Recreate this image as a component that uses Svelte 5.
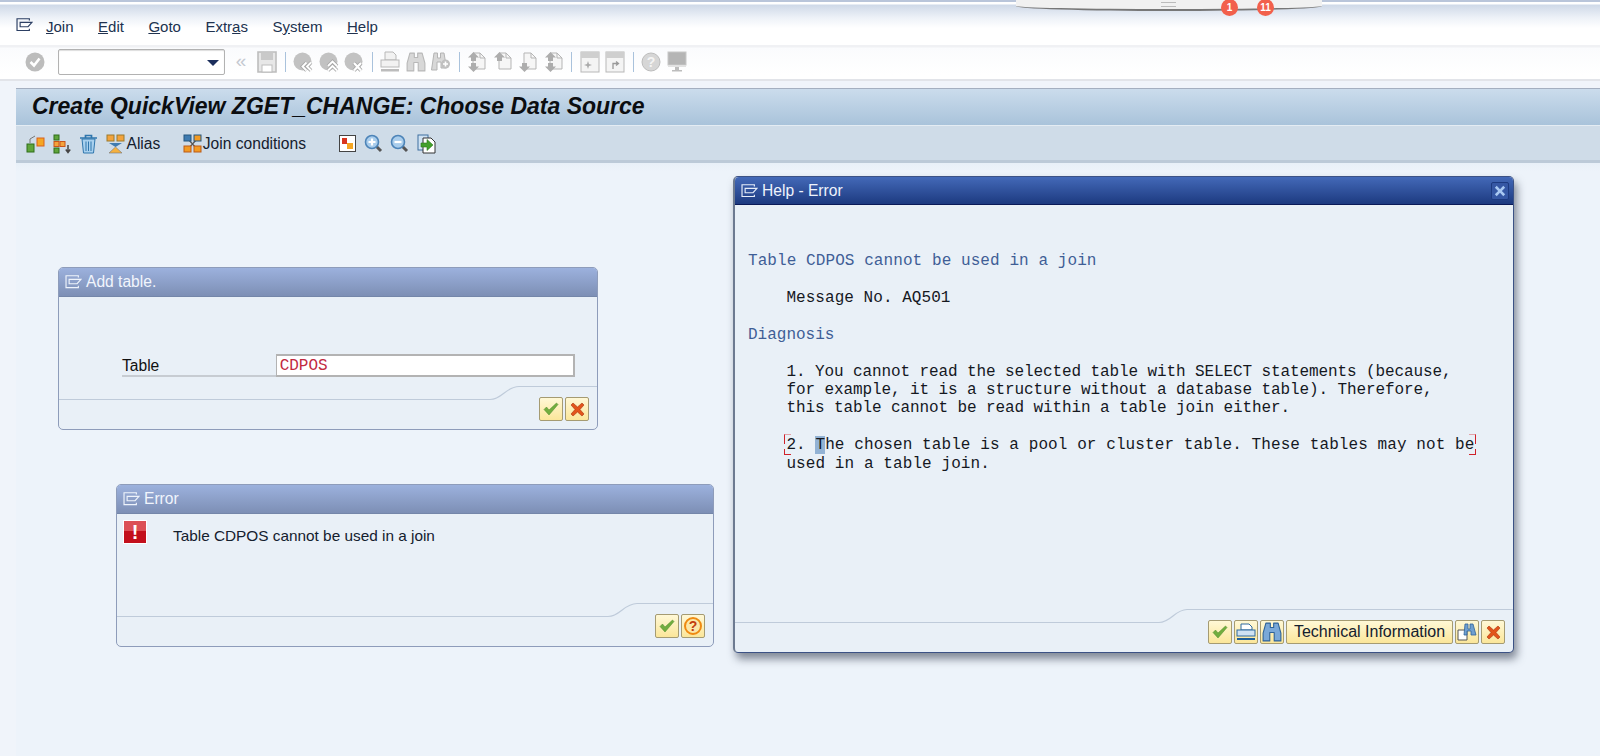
<script>
  const menu = [
    ['J', 'oin', ''], ['E', 'dit', ''], ['G', 'oto', ''],
    ['Extr', 'a', 's'], ['S', 'y', 'stem'], ['H', 'elp', '']
  ];
  const helpText = `Message No. AQ501`;
</script>

{#snippet winIcon(color, size = 17)}
  <svg class="win-icon" width={size} height={size * 0.8} viewBox="0 0 17 14" fill="none" stroke={color} stroke-width="1.2">
    <path d="M13.5 2.5V.8H.8V13H13.5V11" />
    <path d="M4 4.5H16.2L12.2 9H4Z" />
  </svg>
{/snippet}

{#snippet check()}
  <svg width="16" height="14" viewBox="0 0 16 14">
    <path d="M1 7.5 3.5 5 6 8 13.500 1 15 2.500 6 13Z" fill="#72ad3f" stroke="#4c8a28" stroke-width=".5" />
  </svg>
{/snippet}

{#snippet cross()}
  <svg width="15" height="15" viewBox="0 0 15 15">
    <path d="M1 3 3 1 7.5 5 12 1 14 3 10 7.5 14 12 12 14 7.5 10 3 14 1 12 5 7.5Z" fill="#e2541b" stroke="#a8340f" stroke-width=".6" />
  </svg>
{/snippet}

{#snippet binoculars(c = '#7aa8d8', s = '#2f6399')}
  <svg width="20" height="20" viewBox="0 0 18 18">
    <path d="M3.500 1H7.500V5H10.500V1H14.500L17 10V17H11V9.500H7V17H1V10Z" fill={c} stroke={s} stroke-width="1" stroke-linejoin="round" />
  </svg>
{/snippet}

{#snippet greyNav(kind)}
  <svg width="20" height="20" viewBox="0 0 20 20">
    <circle cx="9.500" cy="9.500" r="9" fill="#c2c2c2" />
    {#if kind === 'back'}
      <path d="M13.500 10.500 9.500 14.500 13.500 18.500M18 10.500 14 14.500 18 18.500" fill="none" stroke="#a8a8a8" stroke-width="3.600" />
      <path d="M13.500 10.500 9.500 14.500 13.500 18.500M18 10.500 14 14.500 18 18.500" fill="none" stroke="#fff" stroke-width="1.800" />
    {:else if kind === 'up'}
      <path d="M9 14 13.500 9.500 18 14M9 18.500 13.500 14 18 18.500" fill="none" stroke="#a8a8a8" stroke-width="3.600" />
      <path d="M9 14 13.500 9.500 18 14M9 18.500 13.500 14 18 18.500" fill="none" stroke="#fff" stroke-width="1.800" />
    {:else}
      <path d="M10 11 17 18.500M17 11 10 18.500" fill="none" stroke="#a8a8a8" stroke-width="4" />
      <path d="M10 11 17 18.500M17 11 10 18.500" fill="none" stroke="#fff" stroke-width="2.200" />
    {/if}
  </svg>
{/snippet}

{#snippet doc(kind)}
  <svg width="20" height="22" viewBox="0 0 20 22">
    <path d="M6 2H13L18 7V18H6Z" fill="#f6f6f6" stroke="#b5b5b5" />
    <path d="M13 2V7H18" fill="none" stroke="#b5b5b5" />
    {#if kind === 'first' || kind === 'up' || kind === 'last'}
      <path d="M6.500 1 12 6.500H9V10H4V6.500H1Z" fill="#adadad" />
    {/if}
    {#if kind === 'first' || kind === 'down' || kind === 'last'}
      <path d="M4 12H9V15.500H12L6.500 21 1 15.500H4Z" fill="#adadad" />
    {/if}
  </svg>
{/snippet}

{#snippet magnifier(plus)}
  <svg width="19" height="19" viewBox="0 0 19 19">
    <path d="M12 12 17 17" stroke="#555" stroke-width="3" />
    <circle cx="8" cy="8" r="6.500" fill="#a9cdec" stroke="#4d84b8" stroke-width="1.600" />
    <path d={plus ? 'M4.500 8H11.500M8 4.500V11.500' : 'M4.500 8H11.500'} stroke="#fff" stroke-width="2.200" />
  </svg>
{/snippet}

<div class="page">
  <div class="dock">
    <span class="grip"></span>
    <span class="badge b1">1</span>
    <span class="badge b2">11</span>
  </div>

  <header class="menubar">
    {@render winIcon('#2c3f63')}
    <nav class="menu">
      {#each menu as [a, b, c], i}
        <span class="menu-item">
          {#if i < 3 || i === 5}<u>{a}</u>{b}{:else}{a}<u>{b}</u>{c}{/if}
        </span>
      {/each}
    </nav>
  </header>

  <div class="systoolbar">
    <svg class="ok-icon" width="20" height="20" viewBox="0 0 20 20">
      <circle cx="10" cy="10" r="9.500" fill="#bcbcbc" />
      <path d="M5.500 10 9 13.500 14.500 6.500" fill="none" stroke="#fff" stroke-width="2.600" />
    </svg>
    <div class="combo"><span class="combo-arrow"></span></div>
    <span class="chev">«</span>
    <div class="tgroup">
      <svg width="20" height="22" viewBox="0 0 20 22">
        <path d="M1 1H19V21H1Z" fill="#e7e7e7" stroke="#bdbdbd" stroke-width="1.600" />
        <rect x="4" y="2" width="12" height="7" fill="#c9c9c9" />
        <rect x="5" y="14" width="10" height="7" fill="#fff" stroke="#bdbdbd" />
      </svg>
    </div>
    <span class="tsep"></span>
    <div class="tgroup">
      {@render greyNav('back')}
      {@render greyNav('up')}
      {@render greyNav('x')}
    </div>
    <span class="tsep"></span>
    <div class="tgroup">
      <svg width="20" height="22" viewBox="0 0 20 22">
        <path d="M5 1H13L16 4V9H5Z" fill="#f2f2f2" stroke="#b8b8b8" />
        <rect x="1" y="9" width="18" height="7" fill="#f2f2f2" stroke="#b8b8b8" />
        <rect x="1" y="18" width="18" height="2.500" fill="#bcbcbc" />
      </svg>
      {@render binoculars('#d8d8d8', '#b8b8b8')}
      <svg width="20" height="20" viewBox="0 0 20 20">
        <path d="M3 1H6.500V6H9.500V1H13L15.500 16H10V10H6V18H.5Z" fill="#d8d8d8" stroke="#b4b4b4" />
        <circle cx="14.500" cy="12" r="4.500" fill="#c0c0c0" />
        <path d="M12 12H17M14.500 9.500V14.500" stroke="#fff" stroke-width="1.600" />
      </svg>
    </div>
    <span class="tsep"></span>
    <div class="tgroup">
      {@render doc('first')}
      {@render doc('up')}
      {@render doc('down')}
      {@render doc('last')}
    </div>
    <span class="tsep"></span>
    <div class="tgroup">
      <svg width="20" height="22" viewBox="0 0 20 22">
        <rect x="1" y="1" width="18" height="20" fill="#f4f4f4" stroke="#b8b8b8" />
        <rect x="1" y="1" width="18" height="6" fill="#cfcfcf" />
        <path d="M8 10 9 13 12 14 9 15 8 18 7 15 4 14 7 13Z" fill="#aaa" />
      </svg>
      <svg width="20" height="22" viewBox="0 0 20 22">
        <rect x="1" y="1" width="18" height="20" fill="#f4f4f4" stroke="#b8b8b8" />
        <rect x="1" y="1" width="18" height="6" fill="#cfcfcf" />
        <path d="M8 18V12.500H13M11 10.500 13.500 12.500 11 14.500" fill="none" stroke="#999" stroke-width="1.300" />
      </svg>
    </div>
    <span class="tsep"></span>
    <div class="tgroup">
      <svg width="20" height="20" viewBox="0 0 20 20">
        <circle cx="10" cy="10" r="9" fill="#d6d6d6" stroke="#bcbcbc" />
        <text x="10" y="15" text-anchor="middle" class="qmark">?</text>
      </svg>
      <svg width="20" height="22" viewBox="0 0 20 22">
        <rect x="1" y="1" width="18" height="13" fill="#b5b5b5" stroke="#c8c8c8" />
        <rect x="1" y="14" width="18" height="2" fill="#e2e2e2" />
        <path d="M8 16H12V19H15V20.500H5V19H8Z" fill="#bdbdbd" />
      </svg>
    </div>
  </div>

  <main class="screen">
    <h1 class="title">Create QuickView ZGET_CHANGE: Choose Data Source</h1>

    <div class="apptoolbar">
      <svg class="ai" width="19" height="20" viewBox="0 0 19 20">
        <rect x="1" y="10" width="7" height="8" fill="#5fa53b" stroke="#2f6e1b" />
        <rect x="11" y="4" width="7" height="8" fill="#f5a623" stroke="#d9601c" />
        <path d="M4 9V5L9 2" fill="none" stroke="#777" />
      </svg>
      <svg class="ai" width="19" height="20" viewBox="0 0 19 20">
        <rect x="1" y="1" width="5" height="5" fill="#5fa53b" stroke="#2f6e1b" />
        <rect x="1" y="7.500" width="5" height="5" fill="#f3a33c" stroke="#c9541a" />
        <rect x="7" y="7.500" width="5" height="5" fill="#f3a33c" stroke="#c9541a" />
        <rect x="1" y="14" width="5" height="5" fill="#5fa53b" stroke="#2f6e1b" />
        <path d="M15 11V18M12.800 15.500 15 18.500 17.200 15.500" fill="none" stroke="#444" stroke-width="1.500" />
      </svg>
      <svg class="ai" width="19" height="20" viewBox="0 0 19 20">
        <path d="M1 4H18M6.500 4V1.500H12.500V4" fill="none" stroke="#2f76ad" stroke-width="1.700" />
        <path d="M3 5H16L14.500 19H4.500Z" fill="#a8d0ee" stroke="#2f76ad" />
        <path d="M7 7.500V17M9.500 7.500V17M12 7.500V17" stroke="#2f76ad" />
      </svg>
      <span class="tool-label">
        <svg width="19" height="20" viewBox="0 0 19 20">
          <rect x="1" y="1" width="7" height="6" fill="#f3a33c" stroke="#9b7b2c" />
          <rect x="11" y="1" width="7" height="6" fill="#f3a33c" stroke="#9b7b2c" />
          <path d="M3 9H16L9.500 13Z" fill="#3f7bb0" />
          <path d="M9.500 13 16 19H3Z" fill="#f5b13f" stroke="#777" stroke-width=".6" />
        </svg>
        Alias
      </span>
      <span class="tool-label join">
        <svg width="19" height="20" viewBox="0 0 19 20">
          <path d="M5 5 14 15M14 5 5 15" stroke="#555" stroke-width="1.200" />
          <rect x="1" y="1" width="7" height="6" fill="#3f7bb0" stroke="#24567f" />
          <rect x="11" y="1" width="7" height="6" fill="#f29a22" stroke="#24567f" />
          <rect x="1" y="12" width="7" height="6" fill="#f29a22" stroke="#bc5a17" />
          <rect x="11" y="12" width="7" height="6" fill="#f29a22" stroke="#bc5a17" />
        </svg>
        Join conditions
      </span>
      <div class="zoomgroup">
        <svg width="17" height="17" viewBox="0 0 17 17">
          <rect x=".5" y=".5" width="16" height="16" fill="#fff" stroke="#444" />
          <rect x="3" y="3" width="5" height="6" fill="#d8351f" />
          <rect x="8" y="8" width="6" height="6" fill="#f5a623" />
        </svg>
        {@render magnifier(true)}
        {@render magnifier(false)}
        <svg width="19" height="20" viewBox="0 0 19 20">
          <rect x="1" y="1" width="10" height="15" fill="#cfe2f3" stroke="#3f6f9f" />
          <path d="M6 4H14L18 8V19H6Z" fill="#fff" stroke="#333" />
          <path d="M4 9H10V5.500L16 11 10 16.500V13H4Z" fill="#43a02c" stroke="#2a7a18" stroke-width=".6" />
        </svg>
      </div>
    </div>

    <div class="canvas">
      <section class="dialog add-table">
        <div class="dlg-title light">
          {@render winIcon('#eef3fb')}
          <span>Add table.</span>
        </div>
        <div class="dlg-body add-body">
          <div class="field-row">
            <span class="field-label">Table</span>
            <div class="field-input">CDPOS</div>
          </div>
        </div>
        <div class="dlg-foot">
          <svg class="step-line" height="16" aria-hidden="true">
            <path d="M0 14.500H431C443 14.500 447 1.500 460 1.500H540" fill="none" stroke="#bfcbda" stroke-width="1.200" />
          </svg>
          <div class="btns">
            <button class="sbtn">{@render check()}</button>
            <button class="sbtn">{@render cross()}</button>
          </div>
        </div>
      </section>

      <section class="dialog error">
        <div class="dlg-title light">
          {@render winIcon('#eef3fb')}
          <span>Error</span>
        </div>
        <div class="dlg-body error-body">
          <div class="err-icon"><span>!</span></div>
          <p class="err-text">Table CDPOS cannot be used in a join</p>
        </div>
        <div class="dlg-foot">
          <svg class="step-line" height="16" aria-hidden="true">
            <path d="M0 14.500H491C503 14.500 507 1.500 520 1.500H600" fill="none" stroke="#bfcbda" stroke-width="1.200" />
          </svg>
          <div class="btns">
            <button class="sbtn">{@render check()}</button>
            <button class="sbtn">
              <svg width="18" height="18" viewBox="0 0 18 18">
                <circle cx="9" cy="9" r="8" fill="#fbe7a8" stroke="#ef8a12" stroke-width="2" />
                <text x="9" y="14" text-anchor="middle" class="qmark help">?</text>
              </svg>
            </button>
          </div>
        </div>
      </section>

      <section class="dialog helpwin">
        <div class="dlg-title dark">
          {@render winIcon('#e6edf9')}
          <span>Help - Error</span>
          <span class="closer">
            <svg width="12" height="12" viewBox="0 0 11 11">
              <path d="M.8 2.500 2.500 .8 5.500 3.800 8.500 .8 10.200 2.500 7.200 5.500 10.200 8.500 8.500 10.200 5.500 7.200 2.500 10.200 .8 8.500 3.800 5.500Z" fill="#a8c8f2" />
            </svg>
          </span>
        </div>
        <div class="dlg-body help-body">
          <p class="mono blue head-line">Table CDPOS cannot be used in a join</p>
          <p class="mono sub">{helpText}</p>
          <p class="mono blue sec">Diagnosis</p>
          <p class="mono block one">1. You cannot read the selected table with SELECT statements (because,
for example, it is a structure without a database table). Therefore,
this table cannot be read within a table join either.</p>
          <p class="mono block two"><span class="brk bl"></span><span class="brk br"></span>2. <mark>T</mark>he chosen table is a pool or cluster table. These tables may not be
used in a table join.</p>
        </div>
        <div class="dlg-foot">
          <svg class="step-line" height="16" aria-hidden="true">
            <path d="M0 14.500H424C436 14.500 440 1.500 452 1.500H790" fill="none" stroke="#bfcbda" stroke-width="1.200" />
          </svg>
          <div class="btns">
            <button class="sbtn">{@render check()}</button>
            <button class="sbtn">
              <svg width="20" height="18" viewBox="0 0 20 18">
                <path d="M5 1H13L16 4V7H5Z" fill="#fff" stroke="#2f6b9f" />
                <rect x="1" y="7" width="18" height="6" fill="#cfe2f3" stroke="#2f6b9f" />
                <rect x="1" y="15" width="18" height="2" fill="#1f5f99" />
              </svg>
            </button>
            <button class="sbtn">{@render binoculars()}</button>
            <button class="sbtn wide">Technical Information</button>
            <button class="sbtn">
              <svg width="20" height="18" viewBox="0 0 20 18">
                <path d="M1 7H10V17H1Z" fill="#fff" stroke="#555" />
                <path d="M8 1H11V6H13V1H16L19 12H14V8H10V12H7Z" fill="#6f9fd0" stroke="#2f6399" stroke-width=".8" />
              </svg>
            </button>
            <button class="sbtn">{@render cross()}</button>
          </div>
        </div>
      </section>
    </div>
  </main>
</div>

<style>
  :global(html), :global(body) { margin: 0; height: 100%; }
  :global(body) { background: #f0f4fa; overflow: hidden; }

  .page {
    position: relative;
    height: 756px;
    display: flex;
    flex-direction: column;
    font-family: "Liberation Sans", Arial, sans-serif;
    color: #111;
    overflow: hidden;
  }

  .dock {
    position: absolute;
    left: 1016px;
    top: -8px;
    width: 306px;
    height: 19px;
    box-sizing: border-box;
    background: #f1f1f1;
    border-radius: 0 0 50% 50% / 0 0 5px 5px;
    border-bottom: 2px solid #777;
    z-index: 3;
  }
  .grip {
    position: absolute;
    left: 145px;
    top: 10px;
    width: 15px;
    height: 5px;
    border-top: 1px solid #bbb;
    border-bottom: 1px solid #bbb;
    box-sizing: border-box;
  }
  .badge {
    position: absolute;
    top: 6.500px;
    width: 17px;
    height: 17px;
    border-radius: 50%;
    background: #f2604c;
    color: #fff;
    font-size: 10px;
    font-weight: 700;
    line-height: 17px;
    text-align: center;
  }
  .b1 { left: 205px; }
  .b2 { left: 241px; }

  .menubar {
    height: 45px;
    padding: 6px 0 0 16px;
    display: flex;
    align-items: center;
    background: linear-gradient(#fff 0, #fff 2px, #cfd9e8 3px, #eef2f8 16px, #fff 26px);
    border-top: 2px solid #b9c5da;
    box-sizing: border-box;
  }
  .win-icon { flex: none; }
  .menubar .win-icon { margin-top: -4px; }
  .menu {
    display: flex;
    gap: 24.500px;
    margin-left: 13px;
    font-size: 15px;
    color: #20324f;
  }

  .systoolbar {
    height: 36px;
    padding-left: 25px;
    display: flex;
    align-items: center;
    background: linear-gradient(#f0f1f4 0, #f0f1f4 2px, #fafbfd 3px, #fff 30px);
    border-bottom: 2px solid #e2e4e9;
    box-sizing: border-box;
  }
  .ok-icon { flex: none; }
  .combo {
    width: 167px;
    height: 26px;
    margin-left: 13px;
    box-sizing: border-box;
    background: #fff;
    border: 1px solid #b2b2b2;
    border-radius: 2px;
    position: relative;
    box-shadow: inset 0 1px 1px #ddd;
  }
  .combo-arrow {
    position: absolute;
    right: 5px;
    top: 10px;
    border-left: 6px solid transparent;
    border-right: 6px solid transparent;
    border-top: 6px solid #1c2f5c;
  }
  .chev {
    width: 12px;
    margin: -3px 10px 0 10px;
    font-size: 19px;
    color: #c5c9d1;
    text-align: center;
  }
  .tgroup { display: flex; align-items: center; gap: 5.500px; }
  .tgroup :global(svg) { display: block; flex: none; width: 20px; }
  .tsep { width: 1px; height: 20px; margin: 0 7.500px; background: #a9c2dc; flex: none; }
  .qmark { font: 700 14px "Liberation Sans", sans-serif; fill: #f4f4f4; }
  .qmark.help { fill: #c23c0f; }

  .screen {
    flex: 1;
    display: flex;
    flex-direction: column;
    margin: 7px 0 0 16px;
    min-height: 0;
    border-top: 1px solid #a4afc0;
  }
  .title {
    margin: 0;
    height: 36px;
    padding-left: 16px;
    font-size: 23px;
    font-weight: 700;
    font-style: italic;
    line-height: 35px;
    color: #0b0d10;
    white-space: nowrap;
    background: linear-gradient(#cbdcec, #a9c3da);
    box-sizing: border-box;
  }
  .apptoolbar {
    height: 38px;
    padding: 1px 0 0 10px;
    display: flex;
    align-items: center;
    gap: 7.500px;
    background: #cfdce8;
    border-top: 1px solid #e4ecf3;
    border-bottom: 3px solid #bccad8;
    box-sizing: border-box;
  }
  .ai { flex: none; }
  .tool-label {
    display: inline-flex;
    align-items: center;
    gap: 2px;
    font-size: 15.600px;
    color: #14202e;
    white-space: nowrap;
  }
  .tool-label.join { margin-left: 15px; gap: 1px; }
  .zoomgroup {
    display: flex;
    align-items: center;
    gap: 7.500px;
    margin-left: 26px;
  }
  .canvas {
    flex: 1;
    position: relative;
    background: linear-gradient(#e8f0f8 0, #edf3fa 8px);
  }

  .dialog {
    position: absolute;
    box-sizing: border-box;
    display: flex;
    flex-direction: column;
    background: #e9f0f7;
    border: 1px solid #8e9cba;
    border-radius: 5px;
    overflow: hidden;
  }
  /* the canvas starts at x=16, y=163 */
  .add-table { left: 42px; top: 104px; width: 540px; height: 163px; }
  .error { left: 100px; top: 321px; width: 598px; height: 163px; }
  .helpwin {
    left: 717px;
    top: 13px;
    width: 781px;
    height: 477px;
    border-color: #3c5285;
    border-left: 2px solid #6d7a90;
    box-shadow: 3px 6px 9px rgba(40, 50, 70, .55);
    overflow: visible;
  }

  .dlg-title {
    flex: none;
    display: flex;
    align-items: center;
    gap: 4px;
    height: 29px;
    padding-left: 6px;
    font-size: 15.600px;
    box-sizing: border-box;
  }
  .dlg-title.light {
    color: #f1f5fc;
    background: linear-gradient(#9cb1dd, #7d8fb5);
    border-bottom: 1px solid #7486a9;
  }
  .dlg-title.dark {
    height: 28px;
    color: #eef3fc;
    background: linear-gradient(#4369b8, #1d3a80);
    border-bottom: 1px solid #0a1a58;
    border-radius: 4px 4px 0 0;
    position: relative;
  }
  .closer {
    position: absolute;
    right: 4px;
    top: 5px;
    width: 18px;
    height: 18px;
    display: flex;
    align-items: center;
    justify-content: center;
    background: #3557a4;
    border: 1px solid #1d3a80;
    border-radius: 2px;
    box-sizing: border-box;
  }

  .dlg-body { flex: 1; min-height: 0; box-sizing: border-box; position: relative; }
  .dlg-foot { flex: none; position: relative; height: 43px; }
  .step-line { position: absolute; left: 0; top: -1px; width: 100%; }
  .btns {
    position: absolute;
    right: 8px;
    bottom: 8px;
    display: flex;
    gap: 2px;
  }
  .sbtn {
    min-width: 24px;
    height: 24px;
    padding: 0;
    display: flex;
    align-items: center;
    justify-content: center;
    background: linear-gradient(#fff8d6, #fbe69a);
    border: 1px solid #a59b72;
    border-radius: 2px;
    box-sizing: border-box;
    font: 16px "Liberation Sans", sans-serif;
    color: #14202e;
  }
  .sbtn.wide { width: 167px; }

  .add-body { padding: 57px 22px 0 63px; }
  .field-row { display: flex; align-items: flex-end; height: 23px; }
  .field-label {
    width: 154px;
    height: 23px;
    line-height: 24px;
    font-size: 15.600px;
    border-bottom: 2px solid #c7ccd2;
    box-sizing: border-box;
  }
  .field-input {
    width: 300px;
    height: 23px;
    box-sizing: border-box;
    background: #fff;
    border: 1px solid #b3b3b3;
    border-width: 2px 2px 2px 1px;
    padding-left: 3px;
    font: 16px/20px "Liberation Mono", monospace;
    color: #c2293f;
  }

  .error-body { padding: 6px 0 0 6px; display: flex; align-items: flex-start; }
  .err-icon {
    flex: none;
    width: 24px;
    height: 24px;
    box-sizing: border-box;
    border: 1px solid #fff;
    background: linear-gradient(#dc5055 0, #dc5055 45%, #c3101c 45%);
    color: #fff;
    font: 700 20px/22px "Liberation Sans", sans-serif;
    text-align: center;
  }
  .err-text { margin: 7px 0 0 26px; font-size: 15.350px; color: #14202e; }

  .help-body { padding: 47px 0 0 13px; }
  .mono {
    margin: 0;
    font: 16px/18.400px "Liberation Mono", "Courier New", monospace;
    color: #15181f;
    white-space: pre;
  }
  .blue { color: #3f5e96; }
  .sub { margin: 18.600px 0 0 38.400px; letter-spacing: .05px; }
  .sec { margin-top: 18.400px; }
  .head-line { letter-spacing: .08px; }
  .block { margin: 18.400px 0 0 38.400px; position: relative; }
  .one { letter-spacing: -.1px; }
  .two { letter-spacing: .09px; }
  mark { background: #92b2d4; color: inherit; }
  .brk {
    position: absolute;
    top: -2px;
    width: 7px;
    height: 21px;
  }
  .brk::before, .brk::after {
    content: "";
    position: absolute;
    width: 7px;
    box-sizing: border-box;
  }
  .brk::before {
    top: 0;
    height: 10px;
    border-top: 1px solid #e2a2a8;
  }
  .brk::after {
    bottom: 0;
    height: 6px;
    border-bottom: 1px solid #d0222a;
  }
  .bl { left: -2px; }
  .bl::before, .bl::after { border-left: 1px solid #d0222a; }
  .br { left: 683px; }
  .br::before, .br::after { border-right: 1px solid #d0222a; }
</style>
